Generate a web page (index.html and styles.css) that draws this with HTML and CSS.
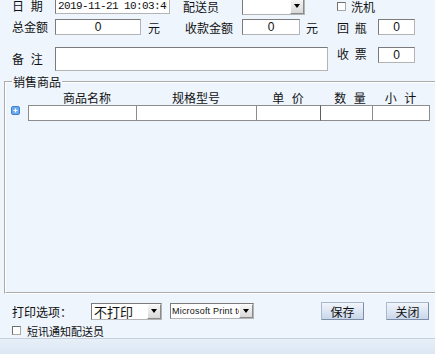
FILE: index.html
```html
<!DOCTYPE html>
<html lang="zh-CN">
<head>
<meta charset="UTF-8">
<title>销售单</title>
<link rel="stylesheet" href="styles.css">
</head>
<body>

<div class="page">
    <div class="row r1">
        <span class="lbl">日 期</span>
        <input type="text" class="field date" value="2019-11-21 10:03:45">
        <span class="lbl-driver">配送员</span>
        <div class="combo combo-driver">
            <span class="combo-val"></span>
            <span class="combo-btn"><i></i></span>
        </div>
        <label class="chk chk-wash"><span class="box"></span>洗机</label>
    </div>

    <div class="row r2">
        <span class="lbl">总金额</span>
        <input type="text" class="field num total" value="0">
        <span class="unit">元</span>
        <span class="lbl-paid">收款金额</span>
        <input type="text" class="field num paid" value="0">
        <span class="unit unit-paid">元</span>
        <span class="lbl-small">回 瓶</span>
        <input type="text" class="field num small" value="0">
    </div>

    <div class="row r3">
        <span class="lbl lbl-note">备 注</span>
        <textarea class="field note"></textarea>
        <span class="lbl-small lbl-ticket">收 票</span>
        <input type="text" class="field num small" value="0">
    </div>

    <!-- 商品明细 -->
    <fieldset class="goods">
        <legend>销售商品</legend>
        <div class="items">
            <div class="items-head">
                <span class="spacer"></span>
                <span class="h h-name">商品名称</span>
                <span class="h h-spec">规格型号</span>
                <span class="h h-price">单 价</span>
                <span class="h h-qty">数 量</span>
                <span class="h h-sum">小 计</span>
            </div>
            <div class="items-row">
                <span class="add">
                    <svg width="9" height="9" viewBox="0 0 9 9">
                        <rect x="0.5" y="0.5" width="8" height="8" rx="1.5" fill="#6cabf0" stroke="#3f80d2"/>
                        <path d="M4.5 2.5v4M2.5 4.5h4" stroke="#fff" stroke-width="1.2"/>
                    </svg>
                </span>
                <span class="cell c-name"></span>
                <span class="cell c-spec"></span>
                <span class="cell c-price"></span>
                <span class="cell c-qty"></span>
                <span class="cell c-sum"></span>
            </div>
        </div>
    </fieldset>

    <div class="row print">
        <span class="lbl-print">打印选项：</span>
        <div class="combo combo-print">
            <span class="combo-val big">不打印</span>
            <span class="combo-btn"><i></i></span>
        </div>
        <div class="combo combo-printer">
            <span class="combo-val tiny">Microsoft Print to PDF</span>
            <span class="combo-btn"><i></i></span>
        </div>
        <button class="btn btn-save">保存</button>
        <button class="btn btn-close">关闭</button>
    </div>

    <div class="row notify">
        <label class="chk"><span class="box"></span>短讯通知配送员</label>
    </div>

    <div class="statusbar"></div>
</div>

</body>
</html>
```

FILE: styles.css
```css
* {
    box-sizing: border-box;
}
html, body {
    margin: 0;
    padding: 0;
}
body {
    width: 435px;
    height: 354px;
    overflow: hidden;
    background-color: #eef5fd;
    font-family: "Noto Sans CJK SC", "Liberation Sans", sans-serif;
    font-size: 12px;
    color: #111;
}
.page {
    height: 354px;
    display: flex;
    flex-direction: column;
    align-items: flex-start;
}
.row {
    display: flex;
    align-items: center;
    flex-shrink: 0;
}
.r1 {
    height: 16px;
    margin-top: -2px;
}
.r2 {
    height: 16px;
    margin-top: 5px;
}
.r3 {
    height: 24px;
    margin-top: 12px;
    align-items: flex-start;
}
.lbl {
    width: 43px;
    margin-left: 12px;
    word-spacing: 4px;
    white-space: pre;
    line-height: 14px;
}
.lbl-note {
    align-self: center;
}

/* text boxes */
.field {
    height: 16px;
    margin: 0;
    padding: 0 2px;
    border: 1px solid;
    border-color: #7b7b7b #b4b4b4 #b4b4b4 #7b7b7b;
    background-color: #fff;
    font-family: "Liberation Sans", sans-serif;
    font-size: 12px;
    color: #111;
    outline: none;
}
.num {
    text-align: center;
}
.date {
    width: 115px;
    font-family: "Liberation Mono", monospace;
    font-size: 11px;
    letter-spacing: -0.6px;
}
.total {
    width: 86px;
}
.paid {
    width: 58px;
}
.small {
    width: 37px;
    margin-left: 11px;
}
.note {
    width: 273px;
    height: 24px;
    resize: none;
}
.unit {
    margin-left: 7px;
}
.unit-paid {
    margin-left: 6px;
}
.lbl-driver {
    width: 59px;
    margin-left: 13px;
}
.lbl-paid {
    width: 57px;
    margin-left: 25px;
}
.lbl-small {
    width: 30px;
    margin-left: 19px;
    word-spacing: 3px;
    white-space: pre;
}
.lbl-ticket {
    margin-left: 9px;
    line-height: 14px;
}

/* drop down boxes */
.combo {
    display: flex;
    background-color: #fff;
    border: 1px solid;
    border-color: #7b7b7b #b4b4b4 #b4b4b4 #7b7b7b;
}
.combo-val {
    flex: 1;
    overflow: hidden;
    white-space: nowrap;
    padding-left: 2px;
}
.combo-btn {
    width: 14px;
    display: flex;
    align-items: center;
    justify-content: center;
    background: linear-gradient(#f6f6f6, #d9d9d9);
    border: 1px solid;
    border-color: #fff #8a8a8a #8a8a8a #fff;
}
.combo-btn i {
    width: 0;
    height: 0;
    border-left: 3px solid transparent;
    border-right: 3px solid transparent;
    border-top: 4px solid #000;
}
.combo-driver {
    width: 63px;
    height: 18px;
}
.combo-print {
    width: 71px;
    height: 17px;
}
.combo-printer {
    width: 84px;
    height: 16px;
    margin-left: 8px;
}
.big {
    font-size: 13px;
    line-height: 15px;
}
.tiny {
    font-family: "Liberation Sans", sans-serif;
    font-size: 9px;
    line-height: 14px;
    letter-spacing: 0.2px;
    padding-left: 1px;
}

/* check boxes */
.chk {
    display: flex;
    align-items: center;
}
.chk .box {
    width: 9px;
    height: 9px;
    margin-right: 5px;
    background-color: #fff;
    border: 1px solid;
    border-color: #6f6f6f #a8a8a8 #a8a8a8 #6f6f6f;
}
.chk-wash {
    margin-left: 32px;
    font-size: 12px;
}
.notify {
    height: 13px;
    margin-top: 4px;
    padding-left: 12px;
    font-size: 11px;
}
.notify .box {
    margin-right: 6px;
}

/* goods list */
.goods {
    width: 440px;
    margin: 4px 0 0 4px;
    padding: 0;
    border: 2px groove #fff;
    min-width: 0;
    flex-shrink: 0;
}
.goods legend {
    margin-left: 6px;
    padding: 0 1px;
    font-size: 12px;
    line-height: 14px;
}
.items {
    height: 201px;
}
.items-head {
    display: flex;
    height: 14px;
    margin-top: 2px;
    line-height: 14px;
}
.spacer {
    width: 22px;
}
.h {
    text-align: center;
    white-space: pre;
    word-spacing: 5px;
}
.h-name {
    width: 108px;
    padding-left: 10px;
}
.h-spec {
    width: 120px;
}
.h-price {
    width: 64px;
}
.h-qty {
    width: 52px;
    padding-left: 8px;
}
.h-sum {
    width: 57px;
}
.items-row {
    display: flex;
    height: 16px;
}
.add {
    width: 22px;
    padding: 1px 0 0 5px;
    line-height: 0;
}
.cell {
    height: 16px;
    margin-left: -1px;
    background-color: #fff;
    border: 1px solid #8c8c8c;
}
.c-name {
    width: 109px;
    margin-left: 0;
}
.c-spec {
    width: 121px;
}
.c-price {
    width: 65px;
}
.c-qty {
    width: 53px;
    border-left-color: #5e5e5e;
}
.c-sum {
    width: 58px;
}

/* bottom bar */
.print {
    height: 18px;
    margin-top: 8px;
}
.lbl-print {
    width: 79px;
    margin-left: 12px;
}
.btn {
    width: 43px;
    height: 18px;
    padding: 0;
    font-family: "Noto Sans CJK SC", sans-serif;
    font-size: 12px;
    color: #111;
    background: linear-gradient(#f1f5fb, #c9d7ea);
    border: 1px solid;
    border-color: #a9b8cc #7d8ea8 #7d8ea8 #a9b8cc;
    border-radius: 1px;
}
.btn-save {
    margin-left: 67px;
}
.btn-close {
    margin-left: 22px;
}
.statusbar {
    align-self: stretch;
    margin-top: auto;
    height: 16px;
    border-top: 1px solid #c6d1dd;
    background: linear-gradient(#e7eff8, #dce7f3);
}
```
